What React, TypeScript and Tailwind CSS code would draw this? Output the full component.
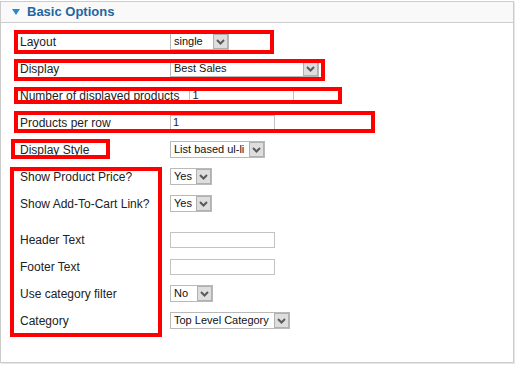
import type { ReactNode } from "react";

function Arrow() {
  return (
    <span className="ml-auto flex h-[15px] w-[15px] shrink-0 items-center justify-center border border-[#b0b0b0] bg-[#dedede]">
      <svg width="9" height="6" viewBox="0 0 9 6">
        <polyline points="1,1 4.5,4.5 8,1" fill="none" stroke="#5a5a5a" strokeWidth="2" />
      </svg>
    </span>
  );
}

function FakeSelect({ value, width }: { value: string; width: string }) {
  return (
    <div className={`flex h-[17px] items-center overflow-hidden border border-[#b9b9b9] bg-white ${width}`}>
      <span className="min-w-0 overflow-hidden whitespace-nowrap pl-[3px] pr-px text-[11px] leading-none text-[#111]">{value}</span>
      <Arrow />
    </div>
  );
}

function TextInput({ value = "" }: { value?: string }) {
  return (
    <div className="flex h-[16px] w-[105px] items-center border border-[#c2c2c2] bg-white pl-[2px] text-[11px] leading-none text-[#222]">
      {value}
    </div>
  );
}

function Row({ label, children, className = "" }: { label: string; children: ReactNode; className?: string }) {
  return (
    <div className={`flex h-[27px] items-center ${className}`}>
      <span className="min-w-[150px] whitespace-nowrap pr-[10px] text-[12px] text-[#222]">{label}</span>
      {children}
    </div>
  );
}

export default function App() {
  const marks = [
    "left-[14px] top-[29px] h-[24px] w-[260px]",
    "left-[14px] top-[58px] h-[22px] w-[311px]",
    "left-[14px] top-[86px] h-[17px] w-[328px]",
    "left-[14px] top-[110px] h-[22px] w-[361px]",
    "left-[11px] top-[138px] h-[20px] w-[99px]",
    "left-[10px] top-[166px] h-[170px] w-[152px]",
  ];

  return (
    <div className="relative h-[365px] w-[515px] bg-white font-['Liberation_Sans',Arial,sans-serif]">
      <div className="mt-px h-[362px] w-[514px] border border-[#cccccc] shadow-[1px_1px_0_#e6e6e6]">
        <div className="flex h-[21px] items-center gap-[7px] border-b border-[#cccccc] bg-[#f9f9f9] pl-[11px]">
          <svg width="8" height="6" viewBox="0 0 8 6">
            <polygon points="0,0 8,0 4,6" fill="#2b87c8" />
          </svg>
          <span className="text-[13px] font-bold text-[#1c67a3]">Basic Options</span>
        </div>

        <div className="flex flex-col pl-[19px] pt-[5px]">
          <Row label="Layout">
            <FakeSelect value="single" width="w-[59px]" />
          </Row>
          <Row label="Display">
            <FakeSelect value="Best Sales" width="w-[149px]" />
          </Row>
          <Row label="Number of displayed products">
            <TextInput value="1" />
          </Row>
          <Row label="Products per row">
            <TextInput value="1" />
          </Row>
          <Row label="Display Style">
            <FakeSelect value="List based ul-li" width="w-[95px]" />
          </Row>
          <Row label="Show Product Price?">
            <FakeSelect value="Yes" width="w-[42px]" />
          </Row>
          <Row label="Show Add-To-Cart Link?">
            <FakeSelect value="Yes" width="w-[42px]" />
          </Row>
          <Row label="Header Text" className="mt-[9px]">
            <TextInput />
          </Row>
          <Row label="Footer Text">
            <TextInput />
          </Row>
          <Row label="Use category filter">
            <FakeSelect value="No" width="w-[43px]" />
          </Row>
          <Row label="Category">
            <FakeSelect value="Top Level Category" width="w-[120px]" />
          </Row>
        </div>
      </div>

      {/* red annotation boxes drawn over the form */}
      {marks.map((m) => (
        <div key={m} className={`pointer-events-none absolute border-4 border-[#ff0000] ${m}`} />
      ))}
    </div>
  );
}
